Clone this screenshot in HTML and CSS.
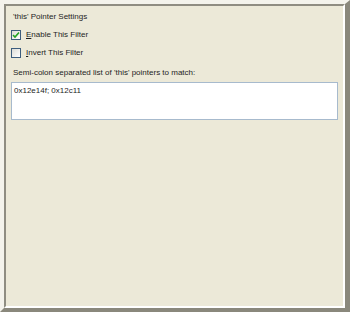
FILE: index.html
```html
<!DOCTYPE html>
<html lang="en">

<head>
    <meta charset="UTF-8">
    <title>'this' Pointer Settings</title>
    <link rel="stylesheet" href="styles.css">
</head>

<body>

    <div class="frame">
        <div class="panel">
            <div class="title">'this' Pointer Settings</div>
            <label class="check">
                <span class="box checked">
                    <svg width="8" height="8" viewBox="0 0 8 8">
                        <path d="M1 4 L3 6 L7 1.5" fill="none" stroke="#21a121" stroke-width="1.6"/>
                    </svg>
                </span>
                <span><u>E</u>nable This Filter</span>
            </label>
            <label class="check">
                <span class="box"></span>
                <span><u>I</u>nvert This Filter</span>
            </label>
            <div class="label">Semi-colon separated list of 'this' pointers to match:</div>
            <div class="field">0x12e14f; 0x12c11</div>
        </div>
    </div>

</body>

</html>
```

FILE: styles.css
```css
* {
    padding: 0;
    margin: 0;
    box-sizing: border-box;
}

html,
body {
    background: #ece9d8;
    font-family: "Liberation Sans", Arial, sans-serif;
    font-size: 8px;
    color: #1e1e1e;
}

.frame {
    width: 350px;
    height: 312px;
    border-style: solid;
    border-width: 4px 5px 4px 4px;
    border-color: #f4f3ec #8a887c #8a887c #f4f3ec;
}

.panel {
    height: 100%;
    padding: 6px 5px 0 7px;
    border: 2px solid;
    border-color: #8f8d82 #fff #fff #8f8d82;
}

.title {
    line-height: 10px;
}

.check {
    display: flex;
    align-items: center;
    gap: 5px;
    margin-left: -2px;
    height: 10px;
    margin-top: 8px;
    line-height: 10px;
}

.check u {
    text-decoration: underline;
}

.box {
    display: flex;
    align-items: center;
    justify-content: center;
    width: 10px;
    height: 10px;
    border: 1px solid #3d5d7d;
    background: linear-gradient(135deg, #dcdcd6, #fff);
}

.label {
    margin-top: 10px;
    line-height: 10px;
}

.field {
    margin: 4px 0 0 -2px;
    height: 38px;
    padding: 3px 2px;
    border: 1px solid #a7bacd;
    background: #fff;
    line-height: 10px;
}
```
